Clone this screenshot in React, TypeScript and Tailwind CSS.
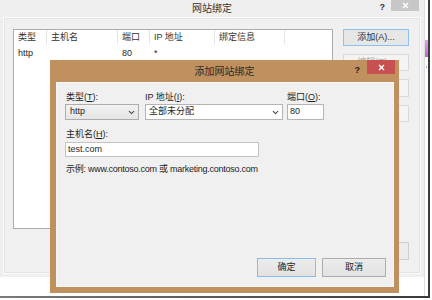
import React from "react";

const Chevron = () => (
  <svg width="7" height="5" viewBox="0 0 7 5" className="shrink-0">
    <path d="M1 1.2 L3.5 3.6 L6 1.2" fill="none" stroke="#444" strokeWidth="1.1" />
  </svg>
);

const CloseX = () => (
  <svg width="7" height="7" viewBox="0 0 7 7">
    <path d="M1 1 L6 6 M6 1 L1 6" stroke="#fff" strokeWidth="1.4" />
  </svg>
);

export default function App() {
  return (
    <div className="relative w-[432px] h-[300px] bg-white overflow-hidden text-[#1e1e1e] font-['Liberation_Sans','Noto_Sans_CJK_SC',sans-serif]">
      {/* background window */}
      <div className="absolute left-0 top-0 w-[424px] h-[277px] bg-[#efefef] flex flex-col">
        <div className="grid grid-cols-[1fr_auto_1fr] h-[17px] items-start">
          <div />
          <div className="text-[10px] leading-[14px] pt-[1px] text-[#333] font-['Noto_Sans_CJK_SC',sans-serif]">网站绑定</div>
          <div className="flex justify-end items-start pr-[5px]">
            <span className="text-[9px] leading-[12px] font-bold text-[#333] mr-[6px] mt-[1px]">?</span>
            <div className="w-[28px] h-[11px] bg-[#c7c7c7] flex items-center justify-center">
              <CloseX />
            </div>
          </div>
        </div>
        <div className="mx-[3px] h-[257px] border border-[#fbfbfb] bg-[#f0f0f0]">
          <div className="h-full border border-[#e4e4e4] flex pl-[8px] pt-[10px] gap-[10px]">
            {/* list view */}
            <div className="w-[320px] h-[200px] bg-white border border-[#adadad] text-[9px]">
              <div className="grid grid-cols-[33px_71px_32px_65px_70px_1fr] h-[14px] leading-[14px] text-[#333]">
                <div className="border-r border-[#e5e5e5] pl-[4px]">类型</div>
                <div className="border-r border-[#e5e5e5] pl-[4px]">主机名</div>
                <div className="border-r border-[#e5e5e5] pl-[4px]">端口</div>
                <div className="border-r border-[#e5e5e5] pl-[4px]">IP 地址</div>
                <div className="border-r border-[#e5e5e5] pl-[4px]">绑定信息</div>
                <div />
              </div>
              <div className="grid grid-cols-[33px_71px_32px_65px_70px_1fr] h-[16px] leading-[16px] mt-[1px]">
                <div className="pl-[4px]">http</div>
                <div />
                <div className="pl-[4px]">80</div>
                <div className="pl-[4px]">*</div>
                <div />
                <div />
              </div>
            </div>
            {/* buttons column */}
            <div className="w-[66px] h-[231px] flex flex-col gap-[8px] text-[9px]">
              <div className="h-[17px] border border-[#8ec1ef] bg-[#e6e6e6] flex items-center justify-center text-[#333]">添加(A)...</div>
              <div className="h-[17px] border border-[#d9d9d9] bg-[#f4f4f4] flex items-center justify-center text-[#a8a8a8]">编辑(E)...</div>
              <div className="h-[18px] border border-[#d9d9d9] bg-[#f4f4f4] flex items-center justify-center text-[#a8a8a8]">删除(R)</div>
              <div className="h-[17px] border border-[#d9d9d9] bg-[#f4f4f4] flex items-center justify-center text-[#a8a8a8]">浏览(B)</div>
              <div className="mt-auto h-[18px] border border-[#cfcfcf] bg-[#ececec] flex items-center justify-center text-[#333]">关闭(C)</div>
            </div>
          </div>
        </div>
      </div>

      {/* neighbouring window sliver */}
      <div className="absolute left-[424px] top-0 w-[1px] h-[296px] bg-[#dedede]" />
      <div className="absolute left-[425px] top-[40px] w-[3px] h-[17px] bg-gradient-to-b from-[#e6a0ee] to-[#c060d0]" />
      <div className="absolute left-[426px] top-[66px] w-[1px] h-[2px] bg-[#9ab8e0]" />
      {/* shadow lines */}
      <div className="absolute left-[428px] top-0 w-[2px] h-[298px] bg-[#3c3c3c]" />
      <div className="absolute left-0 top-[296px] w-[430px] h-[2px] bg-gradient-to-r from-[#7a7a7a] to-[#3a3a3a]" />

      {/* dialog */}
      <div className="absolute left-[50px] top-[60px] w-[349px] h-[233px] bg-[#c1905f] flex flex-col">
        <div className="grid grid-cols-[1fr_auto_1fr] h-[22px] items-start">
          <div />
          <div className="text-[10px] leading-[14px] pt-[4px] text-[#2a2a2a] font-['Noto_Sans_CJK_SC',sans-serif]">添加网站绑定</div>
          <div className="flex justify-end items-start pr-[4px]">
            <span className="text-[9px] leading-[12px] font-bold text-[#222] mr-[7px] mt-[4px]">?</span>
            <div className="w-[28px] h-[14px] bg-[#c75050] flex items-center justify-center">
              <CloseX />
            </div>
          </div>
        </div>
        <div className="flex-1 ml-[6px] mr-[5px] mb-[6px] bg-[#f0f0f0] border border-[#f7f7f7] flex flex-col pl-[8px] pr-[7px] pt-[8px] pb-[9px] text-[9px]">
          <div className="flex items-start">
            <div className="flex flex-col w-[74px]">
              <div className="h-[12px] leading-[12px] pl-[1px]">类型(<u>T</u>):</div>
              <div className="mt-[1px] h-[16px] border border-[#acacac] bg-gradient-to-b from-[#f2f2f2] to-[#e5e5e5] flex items-center justify-between pl-[4px] pr-[3px]">
                <span>http</span>
                <Chevron />
              </div>
            </div>
            <div className="flex flex-col w-[138px] ml-[6px]">
              <div className="h-[12px] leading-[12px]">IP 地址(<u>I</u>):</div>
              <div className="mt-[1px] h-[16px] border border-[#b4b4b4] bg-white flex items-center justify-between pl-[3px] pr-[3px]">
                <span>全部未分配</span>
                <Chevron />
              </div>
            </div>
            <div className="flex flex-col w-[37px] ml-[4px]">
              <div className="h-[12px] leading-[12px]">端口(<u>O</u>):</div>
              <div className="mt-[1px] h-[16px] border border-[#b4b4b4] bg-white flex items-center pl-[2px]">80</div>
            </div>
          </div>
          <div className="mt-[8px] h-[12px] leading-[12px] pl-[1px]">主机名(<u>H</u>):</div>
          <div className="mt-[2px] w-[194px] h-[15px] border border-[#c3c3c3] bg-white flex items-center pl-[2px]">test.com</div>
          <div className="mt-[6px] h-[12px] leading-[12px] pl-[1px] tracking-[-0.25px]">示例: www.contoso.com 或 marketing.contoso.com</div>
          <div className="mt-auto flex justify-end gap-[6px]">
            <div className="w-[59px] h-[19px] border border-[#86bcee] bg-gradient-to-b from-[#ececec] to-[#e2e2e2] flex items-center justify-center">确定</div>
            <div className="w-[64px] h-[19px] border border-[#adadad] bg-gradient-to-b from-[#ececec] to-[#e2e2e2] flex items-center justify-center">取消</div>
          </div>
        </div>
      </div>
    </div>
  );
}
